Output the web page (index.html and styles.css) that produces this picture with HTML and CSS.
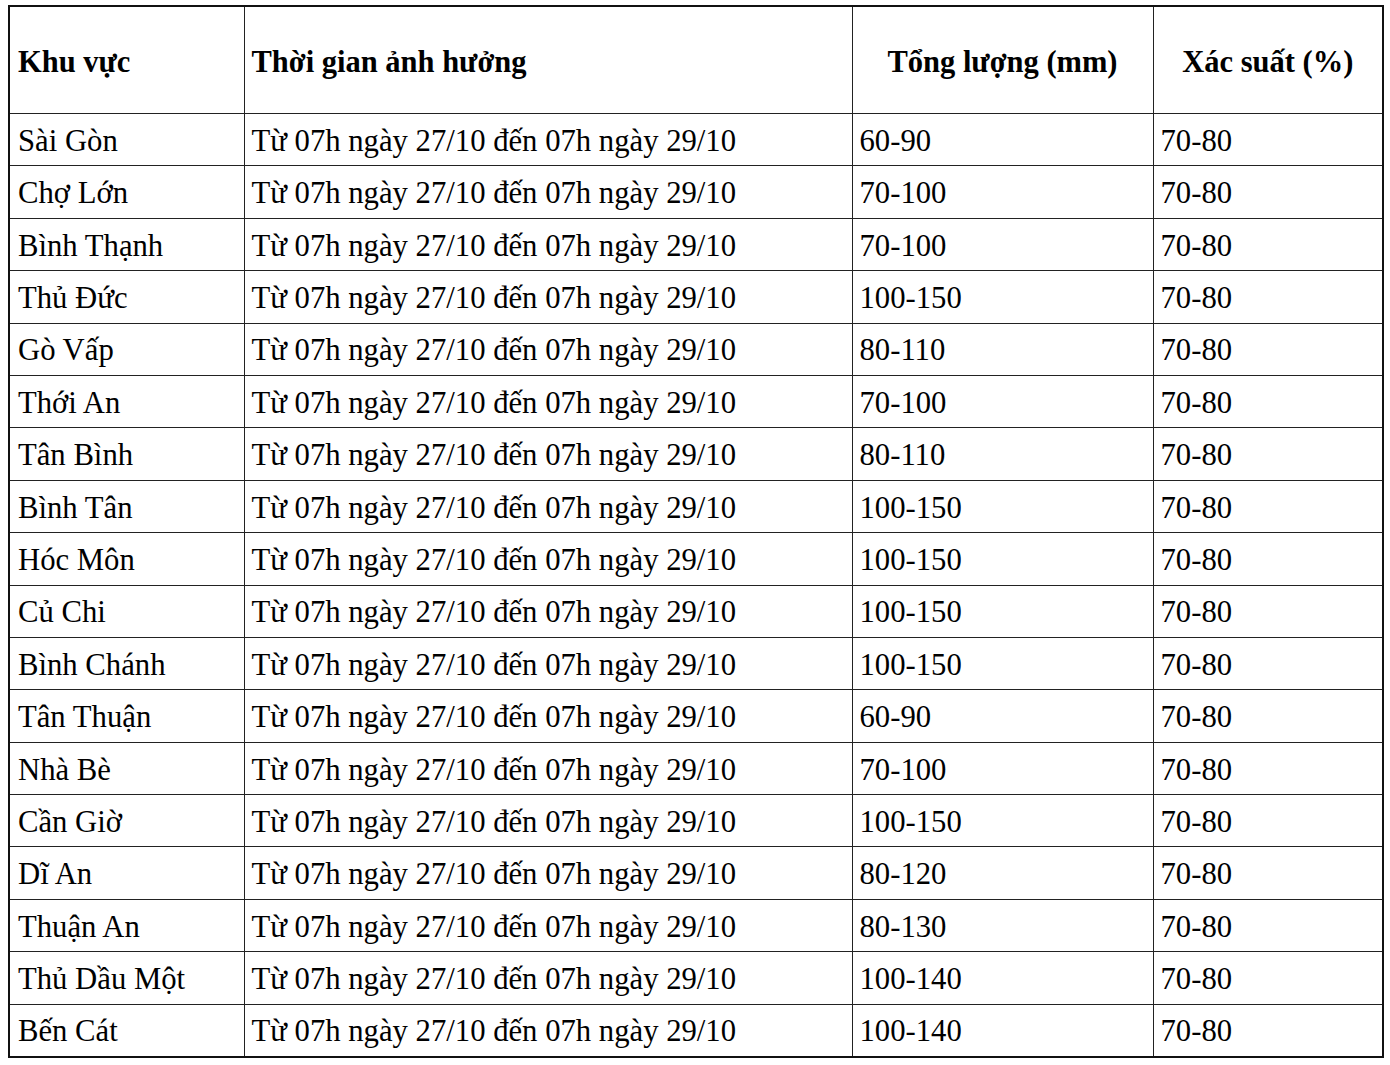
FILE: index.html
```html
<!DOCTYPE html>
<html lang="vi">
<head>
<meta charset="utf-8">
<link rel="stylesheet" href="styles.css">
</head>
<body>
<table class="rain">
<colgroup>
<col class="c1"><col class="c2"><col class="c3"><col class="c4">
</colgroup>
<thead>
<tr><th class="left">Khu vực</th><th class="left">Thời gian ảnh hưởng</th><th>Tổng lượng (mm)</th><th>Xác suất (%)</th></tr>
</thead>
<tbody>
<tr><td>Sài Gòn</td><td>Từ 07h ngày 27/10 đến 07h ngày 29/10</td><td>60-90</td><td>70-80</td></tr>
<tr><td>Chợ Lớn</td><td>Từ 07h ngày 27/10 đến 07h ngày 29/10</td><td>70-100</td><td>70-80</td></tr>
<tr><td>Bình Thạnh</td><td>Từ 07h ngày 27/10 đến 07h ngày 29/10</td><td>70-100</td><td>70-80</td></tr>
<tr><td>Thủ Đức</td><td>Từ 07h ngày 27/10 đến 07h ngày 29/10</td><td>100-150</td><td>70-80</td></tr>
<tr><td>Gò Vấp</td><td>Từ 07h ngày 27/10 đến 07h ngày 29/10</td><td>80-110</td><td>70-80</td></tr>
<tr><td>Thới An</td><td>Từ 07h ngày 27/10 đến 07h ngày 29/10</td><td>70-100</td><td>70-80</td></tr>
<tr><td>Tân Bình</td><td>Từ 07h ngày 27/10 đến 07h ngày 29/10</td><td>80-110</td><td>70-80</td></tr>
<tr><td>Bình Tân</td><td>Từ 07h ngày 27/10 đến 07h ngày 29/10</td><td>100-150</td><td>70-80</td></tr>
<tr><td>Hóc Môn</td><td>Từ 07h ngày 27/10 đến 07h ngày 29/10</td><td>100-150</td><td>70-80</td></tr>
<tr><td>Củ Chi</td><td>Từ 07h ngày 27/10 đến 07h ngày 29/10</td><td>100-150</td><td>70-80</td></tr>
<tr><td>Bình Chánh</td><td>Từ 07h ngày 27/10 đến 07h ngày 29/10</td><td>100-150</td><td>70-80</td></tr>
<tr><td>Tân Thuận</td><td>Từ 07h ngày 27/10 đến 07h ngày 29/10</td><td>60-90</td><td>70-80</td></tr>
<tr><td>Nhà Bè</td><td>Từ 07h ngày 27/10 đến 07h ngày 29/10</td><td>70-100</td><td>70-80</td></tr>
<tr><td>Cần Giờ</td><td>Từ 07h ngày 27/10 đến 07h ngày 29/10</td><td>100-150</td><td>70-80</td></tr>
<tr><td>Dĩ An</td><td>Từ 07h ngày 27/10 đến 07h ngày 29/10</td><td>80-120</td><td>70-80</td></tr>
<tr><td>Thuận An</td><td>Từ 07h ngày 27/10 đến 07h ngày 29/10</td><td>80-130</td><td>70-80</td></tr>
<tr><td>Thủ Dầu Một</td><td>Từ 07h ngày 27/10 đến 07h ngày 29/10</td><td>100-140</td><td>70-80</td></tr>
<tr><td>Bến Cát</td><td>Từ 07h ngày 27/10 đến 07h ngày 29/10</td><td>100-140</td><td>70-80</td></tr>
</tbody>
</table>
</body>
</html>
```
FILE: styles.css
```css
html, body {
  margin: 0;
  padding: 0;
  background: #fff;
}
body {
  padding: 5px 0 0 8px;
  font-family: "Liberation Serif", "Times New Roman", serif;
  color: #000;
}
.rain {
  border-collapse: collapse;
  table-layout: fixed;
  width: 1374px;
  border: 2px solid #111;
}
.c1 { width: 235px; }
.c2 { width: 608px; }
.c3 { width: 301px; }
.c4 { width: 230px; }
.rain th, .rain td {
  border: 1px solid #222;
  padding: 3px 0 0 7px;
  vertical-align: middle;
  white-space: nowrap;
}
.rain th {
  height: 102px;
  font-weight: bold;
  font-size: 30.5px;
  text-align: center;
  padding: 4px 0 0 0;
}
.rain th.left {
  text-align: left;
  padding-left: 8px;
}
.rain th.left + th.left {
  padding-left: 7px;
}
.rain td:first-child {
  padding-left: 8px;
}
.rain td {
  height: 48.4px;
  font-size: 30.7px;
  text-align: left;
  line-height: 1;
}
```
